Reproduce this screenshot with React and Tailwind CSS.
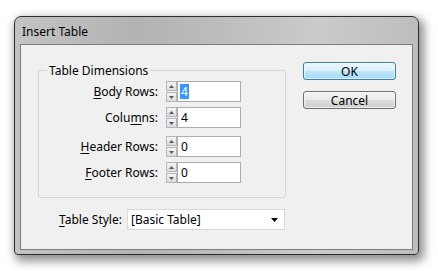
import React from "react";

function Spinner() {
  return (
    <div className="flex flex-col w-[11px] h-[21px] gap-[1px]">
      <div className="flex-1 flex items-center justify-center border border-[#b5b5b5] bg-[linear-gradient(#f4f4f4,#dcdcdc)]">
        <svg width="5" height="3" viewBox="0 0 5 3"><path d="M0 3 L2.5 0 L5 3 Z" fill="#4a5a78" /></svg>
      </div>
      <div className="flex-1 flex items-center justify-center border border-[#b5b5b5] bg-[linear-gradient(#f4f4f4,#dcdcdc)]">
        <svg width="5" height="3" viewBox="0 0 5 3"><path d="M0 0 L2.5 3 L5 0 Z" fill="#4a5a78" /></svg>
      </div>
    </div>
  );
}

function Row({ label, u, value, selected, className = "" }) {
  const idx = label.indexOf(u);
  return (
    <div className={"flex items-center h-[21px] " + className}>
      <div className="w-[119px] text-right text-[12px] leading-[15px] text-black">
        {label.slice(0, idx)}
        <span className="underline underline-offset-[2px]">{u}</span>
        {label.slice(idx + 1)}
      </div>
      <div className="ml-[8px]"><Spinner /></div>
      <div className="w-[64px] h-[21px] border border-[#abadb3] bg-white flex items-center pl-[2px] text-[12px] leading-[15px]">
        {selected ? (
          <span className="bg-[#3399ff] text-white px-[1px]">{value}</span>
        ) : (
          <span className="px-[1px]">{value}</span>
        )}
      </div>
    </div>
  );
}

export default function App() {
  return (
    <div className="w-[438px] h-[271px] bg-white pl-[14px] pt-[16px] font-['Noto_Sans',sans-serif] text-black">
      <div className="w-[405px] h-[239px] flex flex-col rounded-t-[7px] rounded-b-[4px] border border-[#2e2e2e] bg-[linear-gradient(90deg,#c3c3c3,#b3b3b3_30%,#bcbcbc_50%,#cbcbcb_75%,#bdbdbd)] shadow-[3px_4px_10px_2px_rgba(0,0,0,0.45)]">
        <div className="h-[27px] pl-[7px] pt-[7px] text-[12px] leading-[15px] text-black">Insert Table</div>
        <div className="mx-[5px] mb-[4px] flex-1 border border-[#7d7d7d] bg-[#f0f0f0] flex">
          <div className="ml-[17px] mt-[18px] flex flex-col">
            <fieldset className="w-[248px] border border-[#d5d5d5] rounded-[2px] pb-[14px]">
              <legend className="ml-[8px] px-[2px] text-[12px] leading-[15px]">Table Dimensions</legend>
              <div className="flex flex-col mt-[3px]">
                <Row label="Body Rows:" u="B" value="4" selected />
                <Row label="Columns:" u="m" value="4" className="mt-[5px]" />
                <Row label="Header Rows:" u="H" value="0" className="mt-[8px]" />
                <Row label="Footer Rows:" u="F" value="0" className="mt-[5px]" />
              </div>
            </fieldset>
            <div className="flex items-center mt-[11px] h-[21px]">
              <div className="ml-[21px] text-[12px] leading-[15px]">
                <span className="underline underline-offset-[2px]">T</span>able Style:
              </div>
              <div className="ml-[5px] w-[158px] h-[21px] border border-[#d9d9d9] bg-white flex items-center pl-[3px] pr-[6px] text-[12px] leading-[15px]">
                <span className="flex-1">[Basic Table]</span>
                <svg width="7" height="4" viewBox="0 0 7 4"><path d="M0 0 L7 0 L3.5 4 Z" fill="#000" /></svg>
              </div>
            </div>
          </div>
          <div className="ml-[17px] mt-[17px] flex flex-col">
            <div className="w-[93px] h-[18px] rounded-[3px] border border-[#3c7fb1] bg-[linear-gradient(#eaf6fd,#d9f0fc_50%,#bee6fd_50%,#a7d9f5)] shadow-[inset_0_0_0_1px_rgba(255,255,255,0.6)] flex items-center justify-center text-[12px] leading-[15px]">OK</div>
            <div className="mt-[11px] w-[93px] h-[18px] rounded-[3px] border border-[#707070] bg-[linear-gradient(#f2f2f2,#ebebeb_50%,#dddddd_50%,#cfcfcf)] shadow-[inset_0_0_0_1px_rgba(255,255,255,0.6)] flex items-center justify-center text-[12px] leading-[15px]">Cancel</div>
          </div>
        </div>
      </div>
    </div>
  );
}
